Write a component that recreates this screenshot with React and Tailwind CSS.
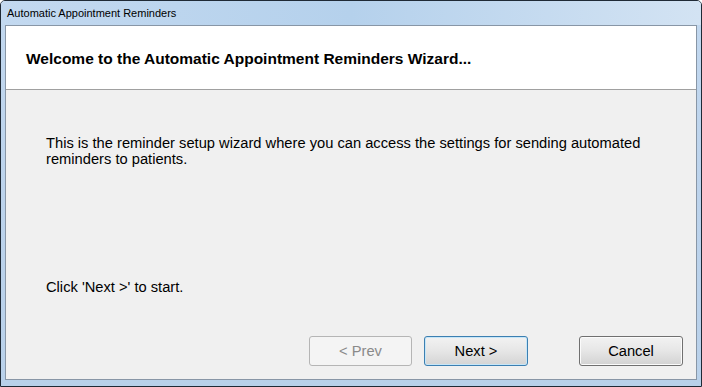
import React from "react";

export default function App() {
  const font = { fontFamily: '"Liberation Sans", Arial, sans-serif' };
  return (
    <div
      className="w-[702px] h-[387px] border border-[#1f2a36] rounded-t-[5px] flex flex-col bg-gradient-to-b from-[#c2d8ef] via-[#bcd3ec] to-[#b9d1ea] overflow-hidden"
      style={font}
    >
      <div className="h-[24px] shrink-0 flex items-center pl-[6px] bg-gradient-to-r from-[#c3d9f0] via-[#b5d1ec] to-[#d3e3f3]">
        <span className="text-[11px] text-black leading-none pt-[1px]">
          Automatic Appointment Reminders
        </span>
      </div>
      <div className="mx-[4px] mb-[6px] flex-1 border border-[#8896a6] flex flex-col bg-[#f0f0f0]">
        <div className="h-[64px] shrink-0 bg-white border-b border-[#a0a0a0] pl-[20px] pt-[24px]">
          <div className="text-[15.5px] leading-[18px] font-bold text-black">
            Welcome to the Automatic Appointment Reminders Wizard...
          </div>
        </div>
        <div className="flex-1 flex flex-col pl-[40px] pt-[45px]">
          <p className="text-[14.7px] leading-[16px] text-black whitespace-nowrap">
            This is the reminder setup wizard where you can access the settings for sending automated
            <br />
            reminders to patients.
          </p>
          <p className="text-[14.7px] leading-[16px] text-black mt-[112px]">
            Click 'Next &gt;' to start.
          </p>
          <div className="mt-[41px] flex justify-end pr-[13px]">
            <div className="w-[103px] h-[30px] border border-[#b5b5b5] rounded-[3px] bg-[#f4f4f4] flex items-center justify-center text-[14.7px] text-[#8a8a8a]">
              &lt; Prev
            </div>
            <div className="ml-[12px] w-[104px] h-[30px] border border-[#3c7fb1] rounded-[3px] bg-gradient-to-b from-[#f2f2f2] via-[#e6e6e6] to-[#d4d4d4] flex items-center justify-center text-[14.7px] text-black shadow-[inset_0_0_0_1px_#c6e6f8]">
              Next &gt;
            </div>
            <div className="ml-[51px] w-[104px] h-[30px] border border-[#707070] rounded-[3px] bg-gradient-to-b from-[#f2f2f2] via-[#e6e6e6] to-[#d2d2d2] flex items-center justify-center text-[14.7px] text-black shadow-[inset_0_0_0_1px_#fbfbfb]">
              Cancel
            </div>
          </div>
        </div>
      </div>
    </div>
  );
}
